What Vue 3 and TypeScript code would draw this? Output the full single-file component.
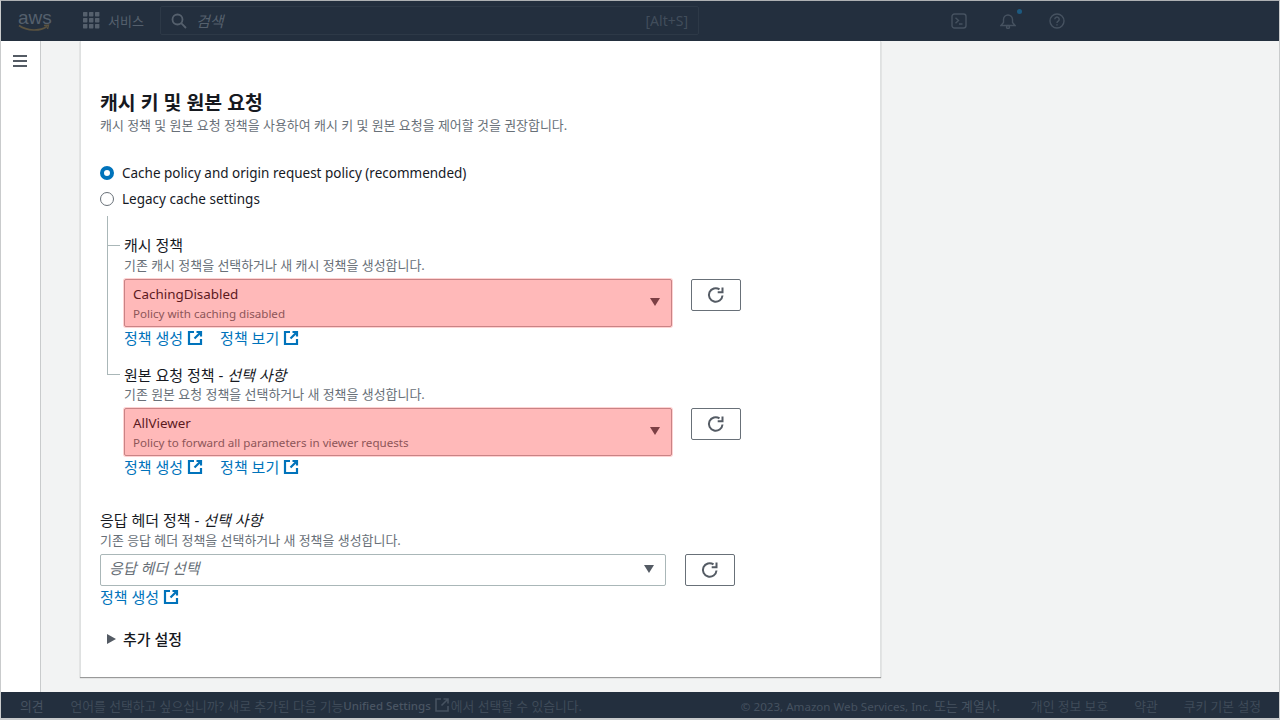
<script setup lang="ts">
interface PolicyField {
  label: string;
  optional?: string;
  hint: string;
  value: string;
  desc: string;
}

const nested: PolicyField[] = [
  {
    label: "캐시 정책",
    hint: "기존 캐시 정책을 선택하거나 새 캐시 정책을 생성합니다.",
    value: "CachingDisabled",
    desc: "Policy with caching disabled",
  },
  {
    label: "원본 요청 정책 - ",
    optional: "선택 사항",
    hint: "기존 원본 요청 정책을 선택하거나 새 정책을 생성합니다.",
    value: "AllViewer",
    desc: "Policy to forward all parameters in viewer requests",
  },
];
</script>

<template>
  <div class="page">
    <header class="topbar">
      <div class="logo">
        <span class="logo-text">aws</span>
        <svg class="smile" width="32" height="8" viewBox="0 0 32 8">
          <path d="M1 1.5C9 7 22 7.5 29 2.5" fill="none" stroke="#5b5340" stroke-width="1.6" />
          <path d="M26 1.5L30.5 1L29.5 5" fill="none" stroke="#5b5340" stroke-width="1.4" />
        </svg>
      </div>
      <div class="services">
        <svg width="17" height="17" viewBox="0 0 17 17" fill="#55606d">
          <rect v-for="n in 9" :key="n" :x="((n - 1) % 3) * 6" :y="Math.floor((n - 1) / 3) * 6" width="4.4" height="4.4" rx="0.6" />
        </svg>
        <span>서비스</span>
      </div>
      <div class="search">
        <svg width="16" height="16" viewBox="0 0 16 16" fill="none" stroke="#55606d" stroke-width="1.8">
          <circle cx="6.5" cy="6.5" r="5" />
          <path d="M10.2 10.2L15 15" />
        </svg>
        <span class="search-text">검색</span>
        <span class="search-key">[Alt+S]</span>
      </div>
      <div class="top-icons">
        <svg width="16" height="16" viewBox="0 0 16 16" fill="none" stroke="#465260" stroke-width="1.4">
          <rect x="1" y="1" width="14" height="14" rx="2.5" />
          <path d="M4.5 4.8L7.5 7.5L4.5 10.2M8 11h3.5" />
        </svg>
        <div class="bell">
          <svg width="16" height="16" viewBox="0 0 16 16" fill="none" stroke="#465260" stroke-width="1.4">
            <path d="M1 12.5h14L12.5 9.5V6.5a4.5 4.5 0 0 0-9 0v3z" />
            <circle cx="8" cy="14" r="1.5" />
          </svg>
          <i class="bell-dot"></i>
        </div>
        <svg width="16" height="16" viewBox="0 0 16 16" fill="none" stroke="#465260" stroke-width="1.4">
          <circle cx="8" cy="8" r="7" />
          <path d="M5.8 6.2a2.2 2.2 0 1 1 3.4 1.9C8.4 8.6 8 9 8 10M8 11.2v1.4" />
        </svg>
      </div>
    </header>

    <div class="middle">
      <aside class="rail">
        <svg class="burger" width="14" height="12" viewBox="0 0 14 12" fill="none" stroke="#545b64" stroke-width="2">
          <path d="M0 1h14M0 6h14M0 11h14" />
        </svg>
      </aside>
      <main class="content">
        <section class="card">
          <h2 class="title">캐시 키 및 원본 요청</h2>
          <p class="hint title-hint">캐시 정책 및 원본 요청 정책을 사용하여 캐시 키 및 원본 요청을 제어할 것을 권장합니다.</p>

          <div class="radios">
            <label class="radio-row">
              <span class="radio on"></span>
              Cache policy and origin request policy (recommended)
            </label>
            <label class="radio-row">
              <span class="radio"></span>
              Legacy cache settings
            </label>
          </div>

          <div class="nested">
            <div v-for="field in nested" :key="field.value" class="field">
              <i class="tick"></i>
              <div class="label">{{ field.label }}<em v-if="field.optional">{{ field.optional }}</em></div>
              <p class="hint">{{ field.hint }}</p>
              <div class="select-row">
                <div class="select error">
                  <div class="select-value">{{ field.value }}</div>
                  <div class="select-desc">{{ field.desc }}</div>
                  <i class="caret"></i>
                </div>
                <button class="refresh" type="button">
                  <svg width="18" height="18" viewBox="0 0 18 18" fill="none" stroke="#545b64" stroke-width="2">
                    <path d="M15.5 9.5A6.8 6.8 0 1 1 12.5 3.3" />
                    <path d="M15.5 1.5v4.8h-4.8" />
                  </svg>
                </button>
              </div>
              <div class="links">
                <a class="link">정책 생성
                  <svg width="16" height="16" viewBox="0 0 16 16" fill="none" stroke="#0073bb" stroke-width="2.2"><path d="M7 2H2v12h12V9M9.5 2H14v4.5M14 2L7.5 8.5" /></svg>
                </a>
                <a class="link">정책 보기
                  <svg width="16" height="16" viewBox="0 0 16 16" fill="none" stroke="#0073bb" stroke-width="2.2"><path d="M7 2H2v12h12V9M9.5 2H14v4.5M14 2L7.5 8.5" /></svg>
                </a>
              </div>
            </div>
          </div>

          <div class="response">
            <div class="label">응답 헤더 정책 - <em>선택 사항</em></div>
            <p class="hint">기존 응답 헤더 정책을 선택하거나 새 정책을 생성합니다.</p>
            <div class="select-row">
              <div class="select plain">
                <span class="placeholder">응답 헤더 선택</span>
                <i class="caret"></i>
              </div>
              <button class="refresh" type="button">
                <svg width="18" height="18" viewBox="0 0 18 18" fill="none" stroke="#545b64" stroke-width="2">
                  <path d="M15.5 9.5A6.8 6.8 0 1 1 12.5 3.3" />
                  <path d="M15.5 1.5v4.8h-4.8" />
                </svg>
              </button>
            </div>
            <div class="links">
              <a class="link">정책 생성
                <svg width="16" height="16" viewBox="0 0 16 16" fill="none" stroke="#0073bb" stroke-width="2.2"><path d="M7 2H2v12h12V9M9.5 2H14v4.5M14 2L7.5 8.5" /></svg>
              </a>
            </div>
          </div>

          <div class="more">
            <i class="more-caret"></i>
            <span>추가 설정</span>
          </div>
        </section>
      </main>
    </div>

    <footer class="footer">
      <span class="feedback">의견</span>
      <span class="lang">언어를 선택하고 싶으십니까? 새로 추가된 다음 기능<b>Unified Settings</b>
        <svg width="16" height="16" viewBox="0 0 16 16" fill="none" stroke="#465260" stroke-width="1.6"><path d="M7 2H2v12h12V9M9.5 2H14v4.5M14 2L7.5 8.5" /></svg>에서 선택할 수 있습니다.</span>
      <span class="copy"><span class="copy-latin">© 2023, Amazon Web Services, Inc.</span> 또는 계열사.</span>
      <span class="foot-link">개인 정보 보호</span>
      <span class="foot-link">약관</span>
      <span class="foot-link">쿠키 기본 설정</span>
    </footer>
  </div>
</template>

<style scoped>
.page {
  box-sizing: border-box;
  width: 1280px;
  height: 720px;
  display: flex;
  flex-direction: column;
  overflow: hidden;
  border-top: 1px solid #aeb1b3;
  border-left: 1px solid #c9cbcc;
  border-right: 1px solid #c9cbcc;
  border-bottom: 2px solid #c9cbcc;
  font-family: "Noto Sans", "Noto Sans CJK KR", sans-serif;
  font-size: 14px;
  color: #16191f;
  background: #f2f3f3;
}
.topbar {
  height: 40px;
  flex: none;
  display: flex;
  align-items: center;
  background: #232f3e;
  color: #55606d;
  padding-left: 17px;
  padding-bottom: 1px;
  box-sizing: border-box;
}
.logo {
  width: 49px;
  display: flex;
  flex-direction: column;
  line-height: 15px;
}
.logo-text {
  font-family: "Liberation Sans", sans-serif;
  font-size: 19px;
  color: #55606d;
}
.smile {
  margin-top: -1px;
}
.services {
  display: flex;
  align-items: center;
  gap: 8px;
  width: 77px;
  margin-left: 16px;
  font-size: 13px;
}
.search {
  display: flex;
  align-items: center;
  box-sizing: border-box;
  width: 539px;
  height: 29px;
  border: 1px solid #2d3947;
  border-radius: 2px;
  padding: 0 10px;
  font-size: 14px;
}
.search-text {
  margin-left: 9px;
  font-size: 15px;
  font-style: italic;
}
.search-key {
  margin-left: auto;
  color: #414d5b;
}
.top-icons {
  display: flex;
  gap: 33px;
  align-items: center;
  margin-left: 252px;
}
.bell {
  position: relative;
  height: 16px;
}
.bell-dot {
  position: absolute;
  right: -6px;
  top: -4px;
  width: 5px;
  height: 5px;
  border-radius: 50%;
  background: #1d5a80;
}
.middle {
  flex: 1;
  display: flex;
  min-height: 0;
}
.rail {
  flex: none;
  box-sizing: border-box;
  width: 40px;
  background: #fff;
  border-right: 1px solid #c9cbcc;
  padding: 14px 0 0 12px;
}
.burger {
  display: block;
}
.content {
  flex: 1;
  padding-left: 39px;
  min-width: 0;
}
.card {
  box-sizing: border-box;
  width: 801px;
  height: 636px;
  background: #fff;
  border-left: 1px solid #dfe1e1;
  border-right: 1px solid #dfe1e1;
  box-shadow: 0 1px 1px 0 #999;
  padding: 50px 19px 0;
}
.title {
  margin: 0;
  font-size: 19.4px;
  line-height: 24px;
  font-weight: 700;
}
.hint {
  margin: 2px 0 0;
  font-size: 12.95px;
  line-height: 16px;
  color: #687078;
}
.title-hint {
  margin-top: 2px;
}
.radios {
  margin-top: 30px;
  display: flex;
  flex-direction: column;
  gap: 6px;
}
.radio-row {
  display: flex;
  align-items: center;
  gap: 8px;
  font-size: 13.5px;
  line-height: 20px;
}
.radio {
  box-sizing: border-box;
  width: 14px;
  height: 14px;
  border: 1px solid #687078;
  border-radius: 50%;
  background: #fff;
}
.radio.on {
  border: 4px solid #0073bb;
}
.nested {
  position: relative;
  margin: 7px 0 0 7px;
  padding: 19px 0 0 17px;
  display: flex;
  flex-direction: column;
  gap: 16px;
}
.nested::before {
  content: "";
  position: absolute;
  left: 0;
  top: 0;
  width: 1px;
  height: 159px;
  background: #aab7b8;
}
.field {
  position: relative;
}
.tick {
  position: absolute;
  left: -16px;
  top: 10px;
  width: 12px;
  height: 1px;
  background: #aab7b8;
}
.label {
  font-size: 15px;
  line-height: 20px;
}
.field + .field .label {
  position: relative;
  top: 1px;
}
.label em {
  font-style: italic;
}
.select-row {
  display: flex;
  align-items: flex-start;
  gap: 19px;
  margin-top: 6px;
}
.select {
  position: relative;
  box-sizing: border-box;
  border-radius: 2px;
}
.select.error {
  width: 548px;
  height: 48px;
  padding: 4px 8px;
  background: #ffb9b9;
  border: 1px solid #c98385;
  box-shadow: 0 0 0 1px #ffd2d2;
}
.select.plain {
  width: 566px;
  height: 32px;
  padding: 0 8px;
  line-height: 26px;
  border: 1px solid #aab7b8;
}
.select-value {
  font-size: 13.4px;
  line-height: 20px;
  color: #5c1a1e;
}
.select-desc {
  font-size: 11.6px;
  line-height: 16px;
  margin-top: 2px;
  color: #8d5558;
}
.placeholder {
  font-size: 15px;
  font-style: italic;
  color: #687078;
}
.caret {
  position: absolute;
  right: 11px;
  top: 50%;
  margin-top: -5px;
  width: 0;
  height: 0;
  border-left: 5.5px solid transparent;
  border-right: 5.5px solid transparent;
  border-top: 8px solid #545b64;
}
.error .caret {
  border-top-color: #7c3f44;
}
.refresh {
  box-sizing: border-box;
  width: 50px;
  height: 32px;
  display: flex;
  align-items: center;
  justify-content: center;
  padding: 0;
  border: 1px solid #687078;
  border-radius: 2px;
  background: #fff;
}
.links {
  display: flex;
  gap: 17px;
  margin-top: 1px;
}
.link {
  display: flex;
  align-items: center;
  gap: 4px;
  font-size: 15px;
  line-height: 20px;
  color: #0073bb;
}
.response {
  margin-top: 33px;
}
.more {
  display: flex;
  align-items: center;
  gap: 7px;
  margin: 22px 0 0 7px;
  font-size: 15px;
  font-weight: 500;
  line-height: 20px;
  color: #16191f;
}
.more-caret {
  width: 0;
  height: 0;
  border-top: 5.5px solid transparent;
  border-bottom: 5.5px solid transparent;
  border-left: 9px solid #545b64;
}
.footer {
  flex: none;
  height: 26px;
  display: flex;
  align-items: center;
  background: #232f3e;
  color: #3f4b59;
  font-size: 12.8px;
  padding-left: 19px;
  white-space: nowrap;
}
.feedback {
  margin-right: 27px;
  color: #465260;
}
.lang {
  display: flex;
  align-items: center;
}
.lang b {
  font-size: 11.5px;
  font-weight: 500;
  color: #4a5563;
}
.lang svg {
  margin: 0 1px 0 3px;
}
.copy {
  margin-left: auto;
  color: #465260;
}
.copy-latin {
  font-size: 11.6px;
}
.foot-link {
  margin-left: 26px;
}
.copy + .foot-link {
  margin-left: 31px;
}
.foot-link:last-child {
  margin-right: 18px;
}
</style>

<style>
html,
body {
  margin: 0;
}
</style>
